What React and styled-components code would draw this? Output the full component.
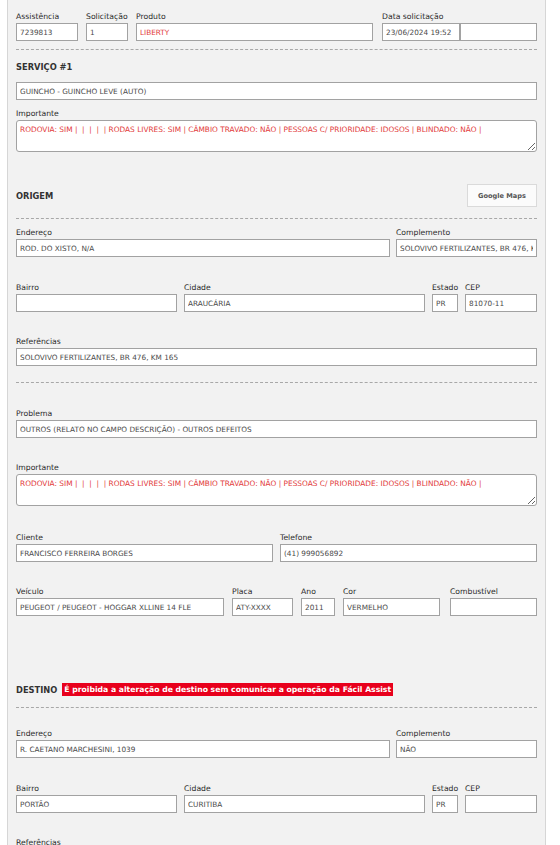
import styled, { createGlobalStyle } from 'styled-components';

const GlobalStyle = createGlobalStyle`
  body {
    margin: 0;
    background: #ffffff;
    font-family: "DejaVu Sans", Verdana, sans-serif;
  }
`;

const Panel = styled.div`
  margin-left: 7px;
  width: 521px;
  padding: 10px 8px 0 8px;
  background: #f2f2f2;
  border-left: 1px solid #d6d6d6;
  border-right: 1px solid #d6d6d6;
  min-height: 845px;
  box-sizing: content-box;
`;

const Row = styled.div`
  display: flex;
  gap: ${(props) => props.gap || 8}px;
  margin-top: ${(props) => props.top || 0}px;
`;

const Field = styled.div`
  display: flex;
  flex-direction: column;
  flex: ${(props) => (props.w ? `0 0 ${props.w}px` : 1)};
  margin-left: ${(props) => props.shift || 0}px;
  min-width: 0;
`;

const Label = styled.label`
  font-size: 7.7px;
  line-height: 13px;
  height: 13px;
  color: #2a2a2a;
  white-space: nowrap;
`;

const Pair = styled.div`
  display: flex;
`;

const Input = styled.input`
  box-sizing: border-box;
  width: 100%;
  height: 18px;
  margin: 0;
  padding: 0 3px;
  border: 1px solid #a2a2a2;
  background: #ffffff;
  font-family: "DejaVu Sans", Verdana, sans-serif;
  font-size: 7.3px;
  color: ${(props) => (props.red ? '#e23a3a' : '#4a4a4a')};
  outline: none;
`;

const TextArea = styled.textarea`
  box-sizing: border-box;
  display: block;
  width: 100%;
  height: 32px;
  margin: 0;
  padding: 4px 3px;
  border: 1px solid #a2a2a2;
  border-radius: 3px;
  background: #ffffff;
  font-family: "DejaVu Sans", Verdana, sans-serif;
  font-size: 7.4px;
  line-height: 9px;
  color: #e23a3a;
  outline: none;
  resize: vertical;
`;

const Dashed = styled.div`
  border-top: 1px dashed #a8a8a8;
  margin-top: ${(props) => props.top || 0}px;
`;

const Heading = styled.div`
  display: flex;
  align-items: center;
  justify-content: space-between;
  height: ${(props) => props.h || 13}px;
  margin-top: ${(props) => props.top || 0}px;
`;

const Title = styled.div`
  display: flex;
  align-items: center;
  gap: 5px;
  font-size: 8.3px;
  font-weight: bold;
  color: #333333;
`;

const Warning = styled.span`
  background: #e8001c;
  color: #ffffff;
  font-weight: bold;
  font-size: 7.7px;
  line-height: 13px;
  padding: 0 2px;
`;

const MapsButton = styled.button`
  width: 70px;
  height: 23px;
  background: #fbfbfb;
  border: 1px solid #dadada;
  font-family: "DejaVu Sans", Verdana, sans-serif;
  font-size: 6.6px;
  font-weight: bold;
  color: #555555;
  padding: 0;
`;

function F({ label, value = '', w, red, shift }) {
  return (
    <Field w={w} shift={shift}>
      <Label>{label}</Label>
      <Input readOnly value={value} red={red} />
    </Field>
  );
}

const importante =
  'RODOVIA: SIM |  |  |  |  | RODAS LIVRES: SIM | CÂMBIO TRAVADO: NÃO | PESSOAS C/ PRIORIDADE: IDOSOS | BLINDADO: NÃO |';

export default function App() {
  return (
    <>
      <GlobalStyle />
      <Panel>
        <Row>
          <F label="Assistência" value="7239813" w={62} />
          <F label="Solicitação" value="1" w={42} />
          <F label="Produto" value="LIBERTY" red />
          <Field w={155} shift={1}>
            <Label>Data solicitação</Label>
            <Pair>
              <Input readOnly value="23/06/2024 19:52" />
              <Input readOnly value="" />
            </Pair>
          </Field>
        </Row>
        <Dashed top={8} />

        <Heading top={10}>
          <Title>SERVIÇO #1</Title>
        </Heading>
        <Row top={9}>
          <Field>
            <Input readOnly value="GUINCHO - GUINCHO LEVE (AUTO)" />
          </Field>
        </Row>
        <Row top={7}>
          <Field>
            <Label>Importante</Label>
            <TextArea readOnly defaultValue={importante} />
          </Field>
        </Row>

        <Heading top={32} h={23}>
          <Title>ORIGEM</Title>
          <MapsButton>Google Maps</MapsButton>
        </Heading>
        <Dashed top={11} />
        <Row top={7} gap={6}>
          <F label="Endereço" value="ROD. DO XISTO, N/A" />
          <F label="Complemento" value="SOLOVIVO FERTILIZANTES, BR 476, KM 165" w={141} />
        </Row>
        <Row top={24} gap={7}>
          <F label="Bairro" value="" w={161} />
          <F label="Cidade" value="ARAUCÁRIA" />
          <F label="Estado" value="PR" w={26} />
          <F label="CEP" value="81070-11" w={72} />
        </Row>
        <Row top={23}>
          <F label="Referências" value="SOLOVIVO FERTILIZANTES, BR 476, KM 165" />
        </Row>
        <Dashed top={16} />

        <Row top={24}>
          <F label="Problema" value="OUTROS (RELATO NO CAMPO DESCRIÇÃO) - OUTROS DEFEITOS" />
        </Row>
        <Row top={23}>
          <Field>
            <Label>Importante</Label>
            <TextArea readOnly defaultValue={importante} />
          </Field>
        </Row>
        <Row top={25} gap={7}>
          <F label="Cliente" value="FRANCISCO FERREIRA BORGES" />
          <F label="Telefone" value="(41) 999056892" />
        </Row>
        <Row top={23}>
          <F label="Veículo" value="PEUGEOT / PEUGEOT - HOGGAR XLLINE 14 FLE" w={208} />
          <F label="Placa" value="ATY-XXXX" w={61} />
          <F label="Ano" value="2011" w={34} />
          <F label="Cor" value="VERMELHO" w={97} />
          <F label="Combustível" value="" shift={2} />
        </Row>

        <Heading top={67}>
          <Title>
            DESTINO
            <Warning>É proibida a alteração de destino sem comunicar a operação da Fácil Assist</Warning>
          </Title>
        </Heading>
        <Dashed top={11} />
        <Row top={19} gap={6}>
          <F label="Endereço" value="R. CAETANO MARCHESINI, 1039" />
          <F label="Complemento" value="NÃO" w={141} />
        </Row>
        <Row top={24} gap={7}>
          <F label="Bairro" value="PORTÃO" w={161} />
          <F label="Cidade" value="CURITIBA" />
          <F label="Estado" value="PR" w={26} />
          <F label="CEP" value="" w={72} />
        </Row>
        <Row top={23}>
          <F label="Referências" value="" />
        </Row>
      </Panel>
    </>
  );
}
